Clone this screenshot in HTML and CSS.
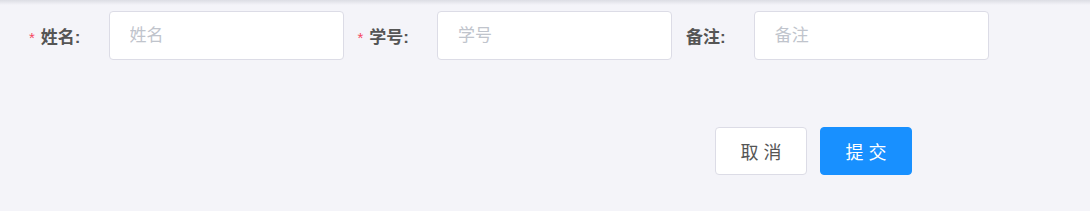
FILE: index.html
```html
<!DOCTYPE html>
<html lang="zh-CN">
<head>
  <meta charset="UTF-8">
  <title>学生信息</title>
  <link rel="stylesheet" href="styles.css">
</head>
<body>
  <div class="page">
    <form class="student-form">
      <div class="form-row">
        <div class="form-item">
          <label class="required">姓名:</label>
          <input type="text" placeholder="姓名">
        </div>
        <div class="form-item">
          <label class="required">学号:</label>
          <input type="text" placeholder="学号">
        </div>
        <div class="form-item">
          <label>备注:</label>
          <input type="text" placeholder="备注">
        </div>
      </div>
      <div class="form-actions">
        <button type="button" class="btn">取消</button>
        <button type="submit" class="btn btn-primary">提交</button>
      </div>
    </form>
  </div>
</body>
</html>
```

FILE: styles.css
```css
body {
  margin: 0;
  font-family: "Liberation Sans", "Noto Sans CJK SC", sans-serif;
  background-color: #f4f4f9;
  color: #555;
}

.page {
  height: 211px;
  background: linear-gradient(#dcdde4, #f4f4f9 5px);
  padding-top: 11px;
  box-sizing: border-box;
}

.form-row {
  display: flex;
  gap: 14px;
  padding-left: 29px;
}

.form-item {
  display: flex;
  align-items: center;
}

.form-item label {
  font-size: 17px;
  font-weight: bold;
  color: #555;
  margin-right: 27px;
}

.form-item label::after {
  content: "";
  margin-left: 1px;
}

.form-item label.required::before {
  content: "*";
  color: #f5475f;
  font-weight: normal;
  font-size: 15px;
  margin-right: 6px;
}

.form-item input {
  width: 235px;
  height: 49px;
  box-sizing: border-box;
  border: 1px solid #dcdce6;
  border-radius: 4px;
  background: #fff;
  padding: 0 20px;
  font-family: inherit;
  font-size: 17px;
  color: #555;
  outline: none;
}

.form-item input::placeholder {
  color: #c0c4cc;
}

.form-actions {
  display: flex;
  justify-content: flex-end;
  gap: 13px;
  margin-top: 67px;
  padding-right: 178px;
}

.btn {
  width: 92px;
  height: 48px;
  border: 1px solid #dcdce6;
  border-radius: 4px;
  background: #fff;
  color: #555;
  font-family: inherit;
  font-size: 18px;
  letter-spacing: 5px;
  text-indent: 5px;
  cursor: pointer;
}

.btn-primary {
  background: #1890ff;
  border-color: #1890ff;
  color: #fff;
}
```
